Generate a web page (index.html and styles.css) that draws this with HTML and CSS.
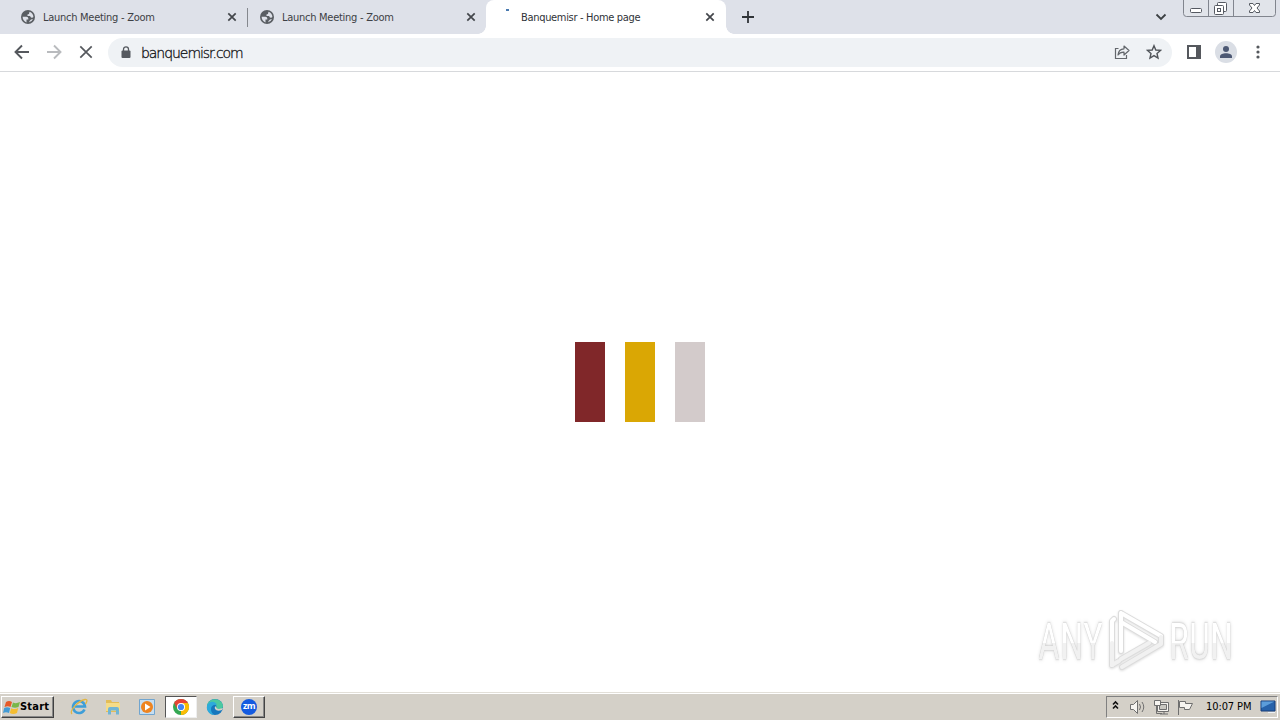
FILE: index.html
```html
<!DOCTYPE html>
<html lang="en">
<head>
<meta charset="utf-8">
<title>Banquemisr - Home page</title>
<link rel="stylesheet" href="styles.css">
</head>
<body>
<svg width="0" height="0" class="defs">
  <symbol id="globe" viewBox="0 0 14 14"><circle cx="7" cy="7" r="7" fill="#5a5e63"/><path d="M1.600 6.800H5.500Q7.300 7 7.300 8.500V9.500H5.500V12.400C3.200 11.800 1.600 9.500 1.600 6.800zM8.500 1.800C10.800 2.500 12.400 4.500 12.400 7Q11.500 8 10 7.500L9 6H6.500V4.500Q8.500 4.500 8.500 1.800zM8 12.300Q11 11.500 12 9L10 9.500Q8.500 10.500 8 12.300z" fill="#dee1e9"/></symbol>
  <symbol id="close" viewBox="0 0 10 10"><path d="M1.300 1.300 8.700 8.700M8.700 1.300 1.300 8.700" stroke="#43464b" stroke-width="1.700"/></symbol>
</svg>
<div class="screen">
  <header class="tabs">
    <div class="tab first"><svg class="fav"><use href="#globe"/></svg><span class="title">Launch Meeting - Zoom</span><svg class="x"><use href="#close"/></svg></div>
    <div class="tab second"><svg class="fav"><use href="#globe"/></svg><span class="title">Launch Meeting - Zoom</span><svg class="x"><use href="#close"/></svg></div>
    <div class="tab active"><i class="spinner"></i><span class="title home">Banquemisr - Home page</span><svg class="x"><use href="#close"/></svg></div>
    <svg class="plus" viewBox="0 0 12 12"><path d="M6 0V12M0 6H12" stroke="#303438" stroke-width="1.800"/></svg>
    <svg class="chevron" viewBox="0 0 12 8"><path d="M1.500 1.500 6 6 10.500 1.500" fill="none" stroke="#3c4043" stroke-width="1.800"/></svg>
    <svg class="winbtns" viewBox="0 0 94 18"><path d="M.5 0V13.500Q.5 16.500 3.500 16.500H89.500Q92.500 16.500 92.500 13.500V0M25.500 0V16.500M50.500 0V16.500" fill="#e1e4ea" stroke="#81858e"/><g fill="#fff" stroke="#555961"><rect x="7.500" y="8.500" width="11" height="4" rx="1"/><rect x="34.500" y="2.500" width="9" height="9" rx="1"/><rect x="31.500" y="5.500" width="9" height="9" rx="1"/><rect x="34.500" y="8.500" width="3" height="3"/><path d="M66.500 3.500H70L71.500 5.500 73 3.500H76.500V5L74 8 76.500 11V12.500H73L71.500 10.500 70 12.500H66.500V11L69 8 66.500 5z"/></g></svg>
  </header>
  <nav class="toolbar">
    <svg class="ic back" viewBox="0 0 16 16"><path d="M15 8H2M8 1.500 1.500 8 8 14.500" fill="none" stroke="#55585d" stroke-width="1.900"/></svg>
    <svg class="ic fwd" viewBox="0 0 16 16"><path d="M1 8H14M8 1.500 14.500 8 8 14.500" fill="none" stroke="#b9bbbe" stroke-width="1.900"/></svg>
    <svg class="ic stop" viewBox="0 0 16 16"><path d="M2.300 2.300 13.700 13.700M13.700 2.300 2.300 13.700" stroke="#55585d" stroke-width="1.700"/></svg>
    <div class="omnibox">
      <svg class="lock" viewBox="0 0 10 13"><rect x=".5" y="4.500" width="9" height="7.500" rx="1" fill="#55595f"/><path d="M2.500 5V3.200a2.500 2.300 0 0 1 5 0V5" fill="none" stroke="#55595f" stroke-width="1.300"/></svg>
      <span class="url">banquemisr.com</span>
      <svg class="share" viewBox="0 0 16 16"><path d="M4.500 4.500H1.500V14.500H12.500V11" fill="none" stroke="#63676c" stroke-width="1.200"/><path d="M4 11Q4.500 5 10 4.800V2L15 6.500 10 11V8.200Q6 8 4 11z" fill="none" stroke="#63676c" stroke-width="1.200" stroke-linejoin="round"/></svg>
      <svg class="star" viewBox="0 0 16 16"><path d="M8 1.700 9.800 6 14.500 6.400 11 9.500 12 14 8 11.600 4 14 5 9.500 1.500 6.400 6.200 6z" fill="none" stroke="#505459" stroke-width="1.400"/></svg>
    </div>
    <svg class="side" viewBox="0 0 14 14"><path d="M1 1H13V13H1z" fill="none" stroke="#55585d" stroke-width="2"/><path d="M9 0H14V14H9z" fill="#55585d"/></svg>
    <svg class="avatar" viewBox="0 0 22 22"><circle cx="11" cy="11" r="11" fill="#dadee5"/><circle cx="11" cy="8" r="3" fill="#4c5873"/><path d="M5 17V15.500C5 11.300 17 11.300 17 15.500V17z" fill="#4c5873"/></svg>
    <svg class="menu" viewBox="0 0 4 14"><g fill="#55585d"><circle cx="2" cy="2" r="1.600"/><circle cx="2" cy="7" r="1.600"/><circle cx="2" cy="12" r="1.600"/></g></svg>
  </nav>
  <main class="page">
    <div class="loader"><i class="bar red"></i><i class="bar gold"></i><i class="bar gray"></i></div>
    <div class="mark">
      <span class="word any">ANY</span>
      <svg class="play" viewBox="0 0 60 66"><g fill="none" stroke-linejoin="round" stroke-linecap="round"><path d="M14 6 54 29 M14 6V44M14 15 48 35M7 12 5 14V58L12 54M15 60 54 37V30M14 52 42 36" stroke="#dcdcdc" stroke-width="6"/><path d="M14 6 54 29 M14 6V44M14 15 48 35M7 12 5 14V58" stroke="#fff" stroke-width="4"/><path d="M5 36V58L12 54M15 60 54 37V30M14 52 42 36" stroke="#f1f1f1" stroke-width="4"/></g></svg>
      <span class="word run">RUN</span>
    </div>
  </main>
  <footer class="taskbar">
    <div class="start"><svg class="flag" viewBox="0 0 17 14"><path d="M3 2Q6 0 9 2L7.500 7Q5 5.500 1.500 7z" fill="#e65a28"/><path d="M10 2.500Q13 4 17 2L15.500 7Q12 8.500 8.500 7z" fill="#79b74a"/><path d="M1.200 8Q4 6.500 7.200 8L6 13Q3 11.500 0 13z" fill="#439bd5"/><path d="M8.200 8.200Q12 10 15.200 8L14 13Q10 15 6.800 13z" fill="#f4bd31"/></svg><b>Start</b></div>
    <svg class="app ie" viewBox="0 0 18 18"><path d="M14.500 11.500A6 6 0 1 1 15 8.500H5" fill="none" stroke="#3e9ed8" stroke-width="2.600"/><path d="M2 16C-1 13 8 3 15 1.500 18 1 17 4 15.500 6" fill="none" stroke="#e2b642" stroke-width="1.300"/></svg>
    <svg class="app folder" viewBox="0 0 18 18"><path d="M2 2H7L8 4H15V14H2z" fill="#e3bd58"/><path d="M2 5H16V13H2z" fill="#f5dc88"/><path d="M4 16.500V11Q4 9 6 9H13Q15 9 15 11V16.500H12V12.500H7V16.500z" fill="#71b5d4"/></svg>
    <svg class="app media" viewBox="0 0 18 18"><path d="M1.500 1.500H16.500V16.500H1.500z" fill="#c6def1" stroke="#71a5cf"/><circle cx="9" cy="9" r="6" fill="#ee8420"/><path d="M7 5.500V12.500L12.500 9z" fill="#fff"/></svg>
    <div class="chromebox"><svg class="app" viewBox="0 0 18 18"><circle cx="9" cy="9" r="8" fill="#34a853"/><path d="M9 9 2.070 5A8 8 0 0 1 15.930 5z" fill="#e94235"/><path d="M9 9 15.930 5A8 8 0 0 1 9 17z" fill="#fbbc04"/><path d="M2.070 5 5.500 11 9 9z" fill="#e94235"/><path d="M9 5H15.900L12.500 11z" fill="#fbbc04"/><circle cx="9" cy="9" r="4" fill="#fff"/><circle cx="9" cy="9" r="3.100" fill="#4285f4"/></svg></div>
    <svg class="app edge" viewBox="0 0 18 18"><circle cx="9" cy="9" r="8" fill="#1677bd"/><path d="M1 8C2-1 16-1 17 8 17 12 11 13 10 10 12 7 8 4 1 8z" fill="#4bc9a0"/><path d="M1 8C3 2 10 3 11 7 8 6 5 8 5 11 5 15 8 17 9 17 3 17 0 12 1 8z" fill="#2daadc"/><path d="M10 8Q8 9 9 11 11 14 16 12L17 10 13 11Q10 11 10 8z" fill="#d4d0c8"/></svg>
    <div class="zoombox"><span class="zm">zm</span></div>
    <div class="tray">
      <svg class="trayicons" viewBox="0 0 86 20"><path d="M3 7.500 5.500 5 8 7.500M3 11.500 5.500 9 8 11.500" fill="none" stroke="#111" stroke-width="1.600"/><g fill="#f6f4f0" stroke="#6f6f6f"><path d="M20.500 7.500H23.500L27.500 3.500V16.500L23.500 12.500H20.500z"/><path d="M29.500 7Q31.500 10 29.500 13M32 5Q35.500 10 32 15" fill="none"/><path d="M47.500 5.500H58.500V14.500H47.500zM50 17H58M54 14.500V17"/><path d="M49.500 7.500H56.500V12.500H49.500z" fill="#c9c7c1"/><path d="M44.500 3.500H50.500V8.500H44.500z"/><path d="M46.500 8.500V16.500H52" fill="none"/><path d="M68.500 3V18M69.500 4.500H75.500V6.500H82.500L79.500 12.500H74.500V10.500H69.500z"/></g></svg>
      <span class="clock">10:07 PM</span>
      <svg class="desk" viewBox="0 0 16 14"><path d="M1 1H15V11H1z" fill="#2762aa" stroke="#173d79"/><path d="M1.500 1.500H14.500L1.500 8z" fill="#5c9dda"/><path d="M8 12.500H15" stroke="#edf1f5"/></svg>
    </div>
  </footer>
</div>
</body>
</html>
```
FILE: styles.css
```css
* { box-sizing: border-box; }
body { margin: 0; font-family: "DejaVu Sans Condensed", "DejaVu Sans", sans-serif; font-stretch: condensed; }
svg { display: block; flex: none; }
.defs { position: absolute; }
.screen { width: 1280px; height: 720px; display: flex; flex-direction: column; overflow: hidden; background: #fff; }
.tabs { height: 34px; flex: none; display: flex; align-items: center; background: #dee1e9; }
.tab { height: 34px; display: flex; align-items: center; font-size: 11px; color: #3d4045; }
.first { width: 248px; padding-left: 21px; background: linear-gradient(#85888e, #85888e) right center / 1px 19px no-repeat; }
.second { width: 238px; padding-left: 12px; background: radial-gradient(circle at 0 0, transparent 7.5px, #fff 8px) right bottom / 8px 8px no-repeat; }
.active { position: relative; width: 240px; padding-left: 20px; background: #fff; border-radius: 8px 8px 0 0; color: #303338; }
.active::after { content: ""; position: absolute; left: 100%; bottom: 0; width: 8px; height: 8px; background: radial-gradient(circle at 100% 0, transparent 7.5px, #fff 8px); }
.fav { width: 14px; height: 14px; margin-right: 8px; }
.title { width: 184px; white-space: nowrap; letter-spacing: -0.27px; }
.home { letter-spacing: -0.32px; }
.x { width: 10px; height: 10px; }
.spinner { width: 3px; height: 2px; margin: -14px 12px 0 0; background: #4a7ab0; }
.plus { width: 12px; height: 12px; margin-left: 16px; }
.chevron { width: 12px; height: 8px; margin-left: 401px; }
.winbtns { width: 94px; height: 18px; align-self: flex-start; margin-left: 16px; }
.toolbar { height: 38px; flex: none; display: flex; align-items: center; padding: 0 0 1px 14px; border-bottom: 1px solid #d7d9dc; }
.ic { width: 16px; height: 16px; margin-right: 16px; }
.stop { margin-right: 14px; }
.omnibox { width: 1064px; height: 29px; padding: 0 10px 0 13px; display: flex; align-items: center; background: #eff2f5; border-radius: 15px; }
.lock { width: 10px; height: 13px; }
.url { margin: 1px 0 0 10px; font-family: "DejaVu Sans", sans-serif; font-stretch: normal; font-weight: 200; font-size: 14px; color: #000; letter-spacing: -1.05px; -webkit-text-stroke: .3px #1e2125; }
.share { width: 16px; height: 16px; margin-left: auto; }
.star { width: 16px; height: 16px; margin-left: 16px; }
.side { width: 14px; height: 14px; margin-left: 15px; }
.avatar { width: 22px; height: 22px; margin-left: 14px; }
.menu { width: 4px; height: 14px; margin-left: 19px; }
.page { flex: 1; position: relative; display: flex; justify-content: center; align-items: center; }
.loader { display: flex; gap: 20px; }
.bar { width: 30px; height: 80px; }
.red { background: #802729; }
.gold { background: #daa704; }
.gray { background: #d3cbcb; }
.mark { position: absolute; left: 1038px; top: 535px; display: flex; align-items: center; height: 66px; }
.word { margin-top: 4px; font-family: Roboto, sans-serif; font-size: 50px; line-height: 60px; color: transparent; background: linear-gradient(#fff 51%, #f1f1f1 51%); -webkit-background-clip: text; background-clip: text; filter: drop-shadow(0 0 1px #bbb) drop-shadow(0 0 2px #ddd); transform-origin: left center; white-space: nowrap; flex: none; }
.any { width: 100px; margin-right: -31px; transform: scaleX(.76); }
.play { width: 60px; height: 66px; filter: drop-shadow(0 1px 1px #ddd); }
.run { width: 103px; transform: scaleX(.75); margin-left: 2px; }
.taskbar { height: 28px; flex: none; padding: 1px 2px 1px 1px; display: flex; align-items: center; background: #d4d0c8; border-top: 1px solid #e2dfd8; box-shadow: inset 0 1px #fff; }
.start { width: 53px; height: 22px; padding-left: 1px; display: flex; align-items: center; border: 1px solid #fff; border-right-color: #404040; border-bottom-color: #404040; box-shadow: inset -1px -1px #888; font-size: 11px; color: #000; }
.start b { letter-spacing: .2px; }
.flag { width: 17px; height: 16px; }
.app { width: 18px; height: 18px; }
.ie { margin-left: 16px; }
.folder { margin-left: 16px; }
.media { margin-left: 16px; }
.chromebox, .zoombox { height: 22px; width: 32px; display: flex; align-items: center; justify-content: center; border: 1px solid #555; }
.chromebox { margin-left: 9px; background: #fff; border-right-color: #eee; border-bottom-color: #eee; }
.edge { margin-left: 9px; }
.zoombox { margin-left: 9px; border-color: #fff #444 #444 #fff; box-shadow: inset -1px -1px #888; }
.zm { width: 16px; height: 16px; border-radius: 50%; background: #145be0; color: #fff; font: bold 9px/14px "Open Sans", sans-serif; text-align: center; letter-spacing: -.5px; }
.tray { width: 172px; height: 22px; margin-left: auto; display: flex; align-items: center; border: 1px solid #808080; border-right-color: #fff; border-bottom-color: #fff; padding-left: 3px; }
.trayicons { width: 86px; height: 20px; }
.clock { width: 54px; margin-left: 10px; font-size: 11px; letter-spacing: -.1px; white-space: nowrap; }
.desk { width: 16px; height: 14px; }
```
